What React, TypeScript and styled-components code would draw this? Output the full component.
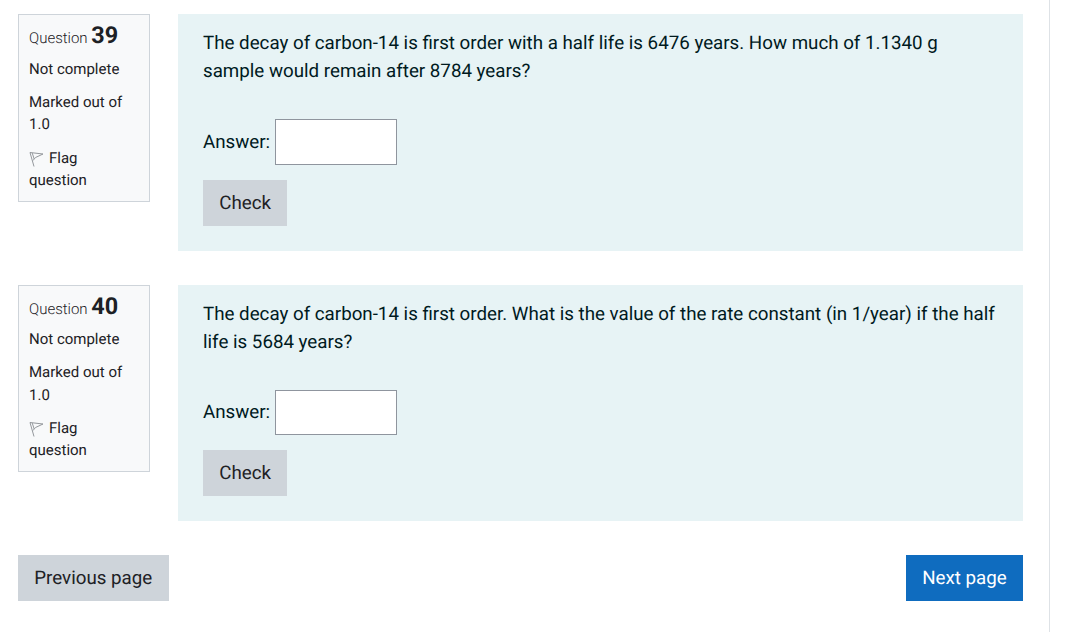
import React from 'react';
import styled, { createGlobalStyle } from 'styled-components';

const GlobalStyle = createGlobalStyle`
  html, body {
    margin: 0;
    padding: 0;
    background: #fff;
    font-family: Roboto, "Liberation Sans", sans-serif;
    color: #1d2125;
    text-rendering: geometricPrecision;
  }
`;

const Page = styled.div`
  box-sizing: border-box;
  width: 1050px;
  height: 632px;
  padding: 14px 26px 0 18px;
  border-right: 1px solid #dee2e6;
  overflow: hidden;
`;

const Question = styled.div`
  display: flex;
  gap: 28px;
  align-items: flex-start;
  margin-bottom: 34px;
`;

const Info = styled.div`
  box-sizing: border-box;
  width: 132px;
  flex: none;
  padding: 5px 15px 10px 10px;
  background: #f8f9fa;
  border: 1px solid #ced4da;
  font-size: 15px;
  line-height: 22.5px;
`;

const Heading = styled.div`
  font-size: 15px;
  font-weight: 300;
  height: 37.6px;
  line-height: 30px;
`;

const Num = styled.span`
  font-size: 23.4px;
  font-weight: 700;
`;

const InfoLine = styled.div`
  margin-bottom: 10.7px;
`;

const FlagLine = styled.div`
  margin-top: 11px;
  line-height: 22px;
`;

const FlagIcon = styled.svg`
  width: 15px;
  height: 16px;
  margin-right: 5px;
  vertical-align: -4px;
`;

const Content = styled.div`
  flex: 1;
  box-sizing: border-box;
  height: 236.6px;
  padding: 15px 25px 25px;
  background: #e7f3f5;
  color: #001a1e;
  font-size: 18.74px;
  line-height: 28px;
`;

const Prompt = styled.div`
  margin-bottom: 34px;
`;

const AnswerRow = styled.div`
  display: flex;
  align-items: center;
  gap: 5px;
  margin-bottom: 15px;
`;

const AnswerInput = styled.input`
  box-sizing: border-box;
  width: 122px;
  height: 45.6px;
  border: 1px solid #8f959e;
  background: #fff;
  padding: 0;
  border-radius: 0;
`;

const Button = styled.button<{ $primary?: boolean }>`
  box-sizing: border-box;
  height: 46px;
  padding: 0 16.3px;
  border: 0;
  border-radius: 0;
  font-family: inherit;
  font-size: 18.74px;
  text-rendering: geometricPrecision;
  background: ${props => (props.$primary ? '#0f6cbf' : '#ced4da')};
  color: ${props => (props.$primary ? '#fff' : '#1d2125')};
`;

const Nav = styled.div`
  display: flex;
  justify-content: space-between;
`;

const Flag = () => (
  <FlagIcon viewBox="0 0 15 16" fill="none" stroke="#94989c" strokeWidth="1">
    <path d="M1 1.5 L5 15.5" />
    <path d="M1 1.5 L14 3 L6.5 6.5 L4 9.5" />
    <path d="M3.2 2 L5.2 8" />
  </FlagIcon>
);

const QuestionBlock: React.FC<{ num: number; text: React.ReactNode }> = ({ num, text }) => (
  <Question>
    <Info>
      <Heading>
        Question <Num>{num}</Num>
      </Heading>
      <InfoLine>Not complete</InfoLine>
      <div>Marked out of 1.0</div>
      <FlagLine>
        <Flag />
        Flag question
      </FlagLine>
    </Info>
    <Content>
      <Prompt>{text}</Prompt>
      <AnswerRow>
        Answer:
        <AnswerInput type="text" />
      </AnswerRow>
      <Button>Check</Button>
    </Content>
  </Question>
);

const App: React.FC = () => (
  <Page>
    <GlobalStyle />
    <QuestionBlock
      num={39}
      text="The decay of carbon-14 is first order with a half life is 6476 years. How much of 1.1340 g sample would remain after 8784 years?"
    />
    <QuestionBlock
      num={40}
      text="The decay of carbon-14 is first order. What is the value of the rate constant (in 1/year) if the half life is 5684 years?"
    />
    <Nav>
      <Button>Previous page</Button>
      <Button $primary>Next page</Button>
    </Nav>
  </Page>
);

export default App;
